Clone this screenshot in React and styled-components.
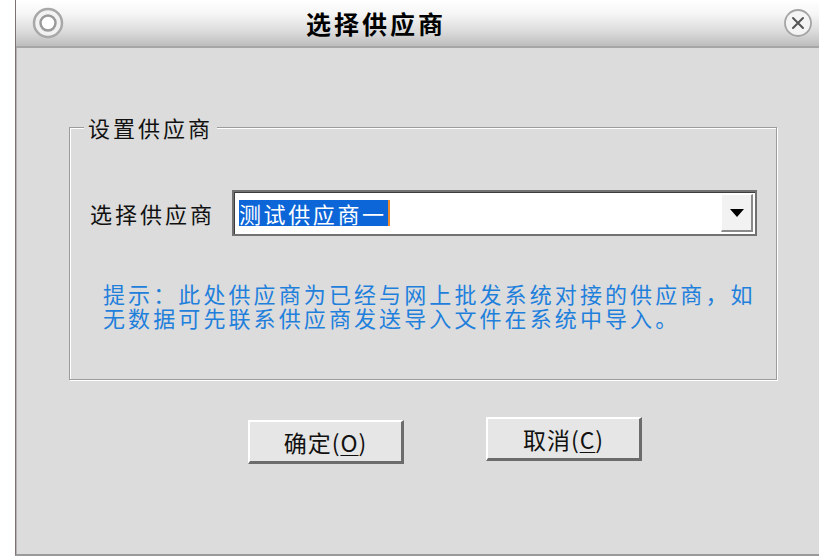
import React from 'react';
import styled, { createGlobalStyle } from 'styled-components';

const GlobalStyle = createGlobalStyle`
  html, body {
    margin: 0;
    padding: 0;
    background: #ffffff;
    font-family: "Noto Sans CJK SC", "Noto Sans", sans-serif;
  }
`

const Page = styled.div`
  display: flex;
  width: 819px;
  height: 556px;
  background: #ffffff;
`

const Gutter = styled.div`
  width: 15px;
  flex: none;
`

const Dialog = styled.div`
  flex: 1;
  display: flex;
  flex-direction: column;
  background: #dcdcdc;
  border-left: 1px solid #7c7272;
  box-shadow: inset 1px 0 0 #b8b0b0;
  border-bottom: 2px solid #9a9a9a;
  box-sizing: border-box;
`

const TitleBar = styled.div`
  height: 46px;
  flex: none;
  display: flex;
  align-items: center;
  padding: 0 6px 0 15px;
  background: linear-gradient(#ffffff 0%, #f6f6f6 30%, #dadada 70%, #bdbdbd 100%);
  border-bottom: 2px solid #a6a6a6;
`

const TitleText = styled.div`
  flex: 1;
  padding-left: 241px;
  font-size: 25px;
  font-weight: 700;
  letter-spacing: 3px;
  color: #000;
  line-height: 46px;
`

const IconBox = styled.svg`
  display: block;
  flex: none;
`

const Body = styled.div`
  flex: 1;
  display: flex;
  flex-direction: column;
  padding: 64px 42px 0 53px;
`

const GroupBox = styled.fieldset`
  margin: 0;
  height: 268px;
  box-sizing: border-box;
  padding: 0 0 0 20px;
  border: 1px solid #9c9c9c;
  box-shadow: inset 1px 1px 0 #ffffff, 1px 1px 0 #ffffff;
`

const GroupLegend = styled.legend`
  margin-left: -6px;
  padding: 0 4px;
  background: #dcdcdc;
  font-size: 22px;
  letter-spacing: 3px;
  line-height: 30px;
  color: #111;
`

const Row = styled.div`
  display: flex;
  align-items: center;
  margin-top: 48px;
`

const Label = styled.span`
  font-size: 22px;
  letter-spacing: 3px;
  color: #111;
  width: 142px;
`

const ComboBox = styled.div`
  width: 525px;
  height: 46px;
  box-sizing: border-box;
  display: flex;
  align-items: center;
  background: #fff;
  border: 2px solid #727272;
  box-shadow: inset 1px 1px 0 #3c3c3c;
  padding: 2px 2px 2px 5px;
`

const Selected = styled.span`
  font-size: 22px;
  line-height: 26px;
  letter-spacing: 2.6px;
  color: #fff;
  background: #0c66d8;
  border-right: 2px solid #f08a2a;
  padding-right: 1px;
`

const Filler = styled.div`
  flex: 1;
`

const DropButton = styled.div`
  width: 32px;
  height: 38px;
  box-sizing: border-box;
  display: flex;
  align-items: center;
  justify-content: center;
  background: #f2f2f2;
  border-left: 1px solid #ffffff;
  border-top: 1px solid #ffffff;
  border-right: 2px solid #8a8a8a;
  border-bottom: 2px solid #8a8a8a;
`

const Hint = styled.p`
  margin: 45px 0 0 13px;
  font-size: 22px;
  line-height: 24px;
  letter-spacing: 3.1px;
  color: #1f80dc;
`

const Actions = styled.div`
  display: flex;
  align-items: flex-start;
  gap: 82px;
  padding: 37px 0 0 179px;
`

const Button = styled.div`
  width: 156px;
  height: 44px;
  box-sizing: border-box;
  display: flex;
  align-items: center;
  justify-content: center;
  margin-top: ${p => p.$drop}px;
  background: #e6e6e6;
  border-top: 2px solid #ffffff;
  border-left: 2px solid #ffffff;
  border-right: 3px solid #6c6c6c;
  border-bottom: 3px solid #6c6c6c;
  font-size: 23px;
  letter-spacing: 1px;
  color: #111;
  u {
    text-decoration-thickness: 1px;
    text-underline-offset: 3px;
  }
`

const MenuIcon = () => (
  <IconBox width="34" height="34" viewBox="0 0 34 34">
    <circle cx="17" cy="17" r="14" fill="#f2f2f2" stroke="#a8a8a8" strokeWidth="2.5" />
    <circle cx="17" cy="17" r="7.5" fill="#ffffff" stroke="#9a9a9a" strokeWidth="2.5" />
  </IconBox>
)

const CloseIcon = () => (
  <IconBox width="30" height="30" viewBox="0 0 30 30">
    <circle cx="15" cy="15" r="13" fill="#f4f4f4" stroke="#a4a4a4" strokeWidth="1.8" />
    <path d="M10 10 L20 20 M20 10 L10 20" stroke="#555" strokeWidth="2" strokeLinecap="round" />
  </IconBox>
)

const App = () => {
  return (
    <Page>
      <GlobalStyle />
      <Gutter />
      <Dialog>
        <TitleBar>
          <MenuIcon />
          <TitleText>选择供应商</TitleText>
          <CloseIcon />
        </TitleBar>
        <Body>
          <GroupBox>
            <GroupLegend>设置供应商</GroupLegend>
            <Row>
              <Label>选择供应商</Label>
              <ComboBox>
                <Selected>测试供应商一</Selected>
                <Filler />
                <DropButton>
                  <svg width="14" height="8" viewBox="0 0 14 8">
                    <path d="M0 0 H14 L7 8 Z" fill="#000" />
                  </svg>
                </DropButton>
              </ComboBox>
            </Row>
            <Hint>
              提示：此处供应商为已经与网上批发系统对接的供应商，如<br />
              无数据可先联系供应商发送导入文件在系统中导入。
            </Hint>
          </GroupBox>
          <Actions>
            <Button $drop={3}>确定(<u>O</u>)</Button>
            <Button $drop={0}>取消(<u>C</u>)</Button>
          </Actions>
        </Body>
      </Dialog>
    </Page>
  )
}

export default App;
